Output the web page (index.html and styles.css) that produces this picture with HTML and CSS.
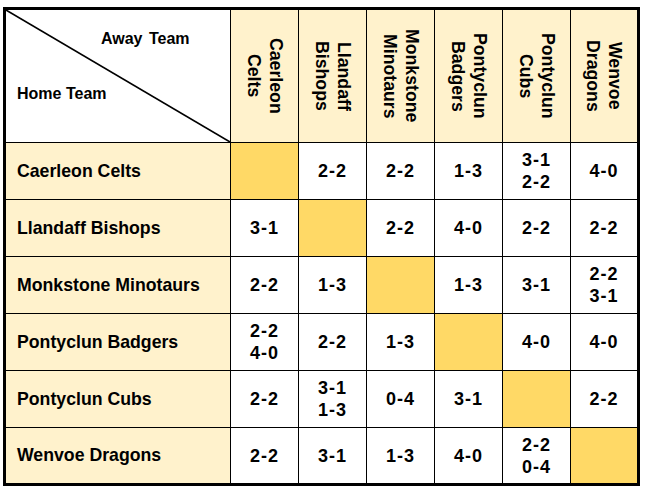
FILE: index.html
```html
<!DOCTYPE html>
<html lang="en">
<head>
<meta charset="utf-8">
<title>Results grid</title>
<link rel="stylesheet" href="styles.css">
</head>
<body>
<div class="wrap">
  <div class="grid">
    <div class="cell corner">
      <svg class="diag" viewBox="0 0 100 100" preserveAspectRatio="none"><line x1="0" y1="0" x2="100" y2="100" stroke="#000" stroke-width="1.6" vector-effect="non-scaling-stroke"/></svg>
      <span class="away">Away Team</span>
      <span class="home">Home Team</span>
    </div>
    <div class="cell head"><span class="vert">Caerleon<br>Celts</span></div>
    <div class="cell head"><span class="vert">Llandaff<br>Bishops</span></div>
    <div class="cell head"><span class="vert">Monkstone<br>Minotaurs</span></div>
    <div class="cell head"><span class="vert">Pontyclun<br>Badgers</span></div>
    <div class="cell head"><span class="vert">Pontyclun<br>Cubs</span></div>
    <div class="cell head"><span class="vert">Wenvoe<br>Dragons</span></div>

    <div class="cell team">Caerleon Celts</div>
    <div class="cell self"></div>
    <div class="cell score">2-2</div>
    <div class="cell score">2-2</div>
    <div class="cell score">1-3</div>
    <div class="cell score">3-1<br>2-2</div>
    <div class="cell score">4-0</div>

    <div class="cell team">Llandaff Bishops</div>
    <div class="cell score">3-1</div>
    <div class="cell self"></div>
    <div class="cell score">2-2</div>
    <div class="cell score">4-0</div>
    <div class="cell score">2-2</div>
    <div class="cell score">2-2</div>

    <div class="cell team">Monkstone Minotaurs</div>
    <div class="cell score">2-2</div>
    <div class="cell score">1-3</div>
    <div class="cell self"></div>
    <div class="cell score">1-3</div>
    <div class="cell score">3-1</div>
    <div class="cell score">2-2<br>3-1</div>

    <div class="cell team">Pontyclun Badgers</div>
    <div class="cell score">2-2<br>4-0</div>
    <div class="cell score">2-2</div>
    <div class="cell score">1-3</div>
    <div class="cell self"></div>
    <div class="cell score">4-0</div>
    <div class="cell score">4-0</div>

    <div class="cell team">Pontyclun Cubs</div>
    <div class="cell score">2-2</div>
    <div class="cell score">3-1<br>1-3</div>
    <div class="cell score">0-4</div>
    <div class="cell score">3-1</div>
    <div class="cell self"></div>
    <div class="cell score">2-2</div>

    <div class="cell team">Wenvoe Dragons</div>
    <div class="cell score">2-2</div>
    <div class="cell score">3-1</div>
    <div class="cell score">1-3</div>
    <div class="cell score">4-0</div>
    <div class="cell score">2-2<br>0-4</div>
    <div class="cell self"></div>
  </div>
</div>
</body>
</html>
```
FILE: styles.css
```css
html, body {
  margin: 0;
  padding: 0;
  background: #fff;
}
.wrap {
  padding: 7px 0 0 3px;
}
.grid {
  display: grid;
  width: max-content;
  grid-template-columns: 224px repeat(5, 67px) 66px;
  grid-template-rows: 132px repeat(5, 56px) 55px;
  gap: 1px;
  background: #000;
  border: 3px solid #000;
  font-family: "Liberation Sans", Arial, sans-serif;
  font-weight: bold;
  color: #000;
}
.cell {
  background: #fff;
  display: flex;
  align-items: center;
  justify-content: center;
}
.corner {
  position: relative;
  flex-direction: column;
  align-items: flex-start;
  justify-content: flex-start;
  font-size: 16px;
  line-height: 18px;
}
.diag {
  position: absolute;
  left: 0;
  top: 0;
  width: 100%;
  height: 100%;
}
.away {
  margin: 20px 0 0 95px;
  word-spacing: 2px;
}
.home {
  margin: 37px 0 0 11px;
}
.head {
  background: #fff2cc;
  font-size: 17.7px;
  line-height: 22px;
}
.vert {
  writing-mode: vertical-rl;
  text-align: center;
}
.team {
  background: #fff2cc;
  justify-content: flex-start;
  padding-left: 11px;
  font-size: 17.7px;
}
.self {
  background: #ffd966;
}
.score {
  font-size: 18px;
  line-height: 22px;
  letter-spacing: 1px;
  text-align: center;
}
```
